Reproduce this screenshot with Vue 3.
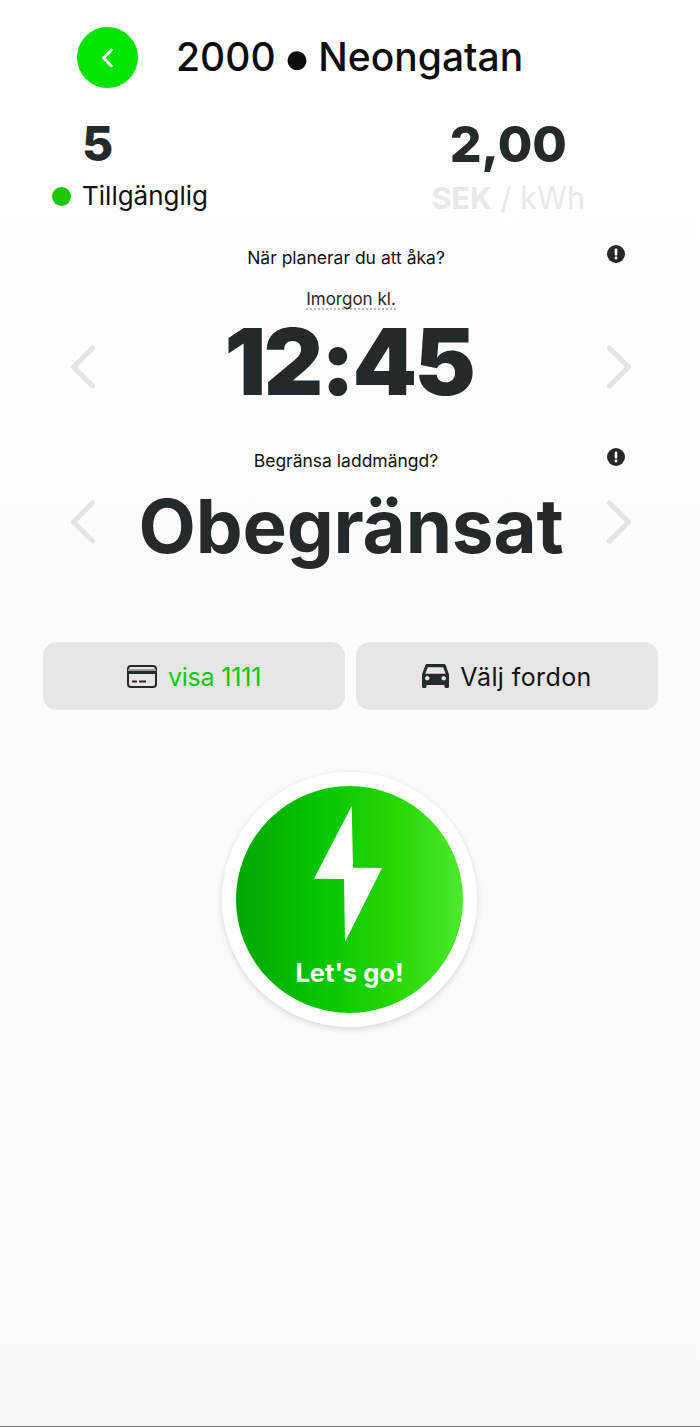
<script setup>
const infoDot = { cx: 9, cy: 13, r: 1.4 }
</script>

<template>
  <div class="page">
    <header class="head">
      <button class="back" aria-label="Tillbaka">
        <svg width="14" height="20" viewBox="0 0 14 20"><path d="M10.500 2 2.500 10l8 8" fill="none" stroke="#fff" stroke-width="2.800" stroke-linecap="round" stroke-linejoin="round"/></svg>
      </button>
      <h1 class="title">2000 <span class="bullet">•</span> Neongatan</h1>
    </header>

    <section class="stats">
      <div class="stat-left">
        <div class="count">5</div>
        <div class="status"><span class="dot"></span><span>Tillgänglig</span></div>
      </div>
      <div class="stat-right">
        <div class="price">2,00</div>
        <div class="unit"><b>SEK</b> / kWh</div>
      </div>
    </section>

    <section class="question q1">
      <span class="q-text">När planerar du att åka?</span>
      <svg class="info" width="18" height="18" viewBox="0 0 18 18"><circle cx="9" cy="9" r="9" fill="#24292c"/><rect x="7.700" y="3.600" width="2.600" height="7" rx="1.200" fill="#fff"/><circle :cx="infoDot.cx" :cy="infoDot.cy" :r="infoDot.r" fill="#fff"/></svg>
    </section>
    <div class="day"><span>Imorgon kl.</span></div>
    <section class="picker time">
      <svg class="chev" width="26" height="44" viewBox="0 0 26 44"><path d="M22.500 3 3.500 22l19 19" fill="none" stroke="#e4e4e4" stroke-width="5" stroke-linecap="round" stroke-linejoin="round"/></svg>
      <div class="big-time">12:45</div>
      <svg class="chev" width="26" height="44" viewBox="0 0 26 44"><path d="M3.500 3l19 19-19 19" fill="none" stroke="#e4e4e4" stroke-width="5" stroke-linecap="round" stroke-linejoin="round"/></svg>
    </section>

    <section class="question q2">
      <span class="q-text">Begränsa laddmängd?</span>
      <svg class="info" width="18" height="18" viewBox="0 0 18 18"><circle cx="9" cy="9" r="9" fill="#24292c"/><rect x="7.700" y="3.600" width="2.600" height="7" rx="1.200" fill="#fff"/><circle :cx="infoDot.cx" :cy="infoDot.cy" :r="infoDot.r" fill="#fff"/></svg>
    </section>
    <section class="picker limit">
      <svg class="chev" width="26" height="44" viewBox="0 0 26 44"><path d="M22.500 3 3.500 22l19 19" fill="none" stroke="#e4e4e4" stroke-width="5" stroke-linecap="round" stroke-linejoin="round"/></svg>
      <div class="big-limit">Obegränsat</div>
      <svg class="chev" width="26" height="44" viewBox="0 0 26 44"><path d="M3.500 3l19 19-19 19" fill="none" stroke="#e4e4e4" stroke-width="5" stroke-linecap="round" stroke-linejoin="round"/></svg>
    </section>

    <section class="buttons">
      <button class="pill green">
        <svg width="30" height="23" viewBox="0 0 30 23"><rect x="1" y="1" width="28" height="21" rx="3" fill="none" stroke="#24292c" stroke-width="2"/><rect x="1" y="4" width="28" height="2" fill="#9a9c9d"/><rect x="1" y="6" width="28" height="3" fill="#24292c"/><rect x="5" y="15.500" width="5" height="2" fill="#24292c"/><rect x="12" y="15.500" width="7" height="2" fill="#24292c"/></svg>
        <span class="visa-label">visa 1111</span>
      </button>
      <button class="pill">
        <svg width="27" height="24" viewBox="3 5 18 16"><path fill-rule="evenodd" d="M18.920 6.010C18.720 5.420 18.160 5 17.500 5h-11c-.66 0-1.210.42-1.420 1.010L3 12v8c0 .55.45 1 1 1h1c.55 0 1-.45 1-1v-1h12v1c0 .55.45 1 1 1h1c.55 0 1-.45 1-1v-8l-2.080-5.990zM6.500 16c-.83 0-1.500-.67-1.500-1.500S5.670 13 6.500 13s1.500.67 1.500 1.500S7.330 16 6.500 16zm11 0c-.83 0-1.500-.67-1.500-1.500s.67-1.500 1.500-1.500 1.500.67 1.500 1.500-.67 1.500-1.500 1.500zM5.200 11.500 6.900 7.200h10.200l1.700 4.300H5.200z" fill="#24292c"/></svg>
        <span class="car-label">Välj fordon</span>
      </button>
    </section>

    <div class="go-wrap">
      <button class="go">
        <svg class="bolt" width="70" height="137" viewBox="0 0 70 137"><path d="M37.700 0 39 61.700 68 62 31 136 30 73 0 72.700Z" fill="#fff"/></svg>
        <span class="go-text">Let's go!</span>
      </button>
    </div>
  </div>
</template>

<style>
html, body { margin: 0; padding: 0; }
</style>

<style scoped>
.page {
  box-sizing: border-box;
  width: 700px;
  height: 1427px;
  padding-top: 27px;
  overflow: hidden;
  font-family: "Inter", "Noto Sans", sans-serif;
  color: #24292c;
  background: linear-gradient(180deg, #ffffff 0%, #f8f8f8 100%);
  border-bottom: 1px solid #777;
}
button { font: inherit; border: 0; padding: 0; }
.head { display: flex; align-items: center; gap: 38px; padding-left: 77px; height: 61px; }
.back { width: 61px; height: 61px; border-radius: 50%; background: #00e600; display: flex; align-items: center; justify-content: center; }
.title { margin: 0 0 2px; font-size: 39px; line-height: 44px; font-weight: 500; color: #0c0c0c; white-space: nowrap; word-spacing: -5px; }
.bullet { font-size: 60px; line-height: 0; vertical-align: -7px; }
.stats { display: flex; justify-content: space-between; padding: 28px 115px 0 52px; height: 104px; }
.stat-left { display: flex; flex-direction: column; }
.count { font-size: 48px; line-height: 56px; font-weight: 800; padding-left: 30px; }
.status { display: flex; align-items: center; gap: 11px; font-size: 26px; line-height: 34px; color: #111; margin-top: 7px; }
.dot { width: 19px; height: 19px; border-radius: 50%; background: #1ec800; }
.stat-right { display: flex; flex-direction: column; align-items: center; }
.price { font-size: 50px; line-height: 56px; font-weight: 800; }
.unit { font-size: 30.500px; line-height: 36px; color: #e8e8e8; white-space: nowrap; margin-top: 8px; }
.unit b { font-weight: 700; }
.question { position: relative; display: flex; justify-content: center; padding-right: 8px; }
.q-text { font-size: 17.500px; line-height: 24px; color: #111; }
.info { position: absolute; left: 607px; top: -1px; }
.q1 { margin-top: 26px; }
.day { display: flex; justify-content: center; margin-top: 18px; padding-left: 2px; font-size: 17px; }
.day span { border-bottom: 2px dotted #bbb; line-height: 22px; height: 20px; }
.picker { display: flex; align-items: center; justify-content: space-between; padding: 0 68px 0 70px; }
.time { height: 108px; margin-top: 3px; }
.big-time { font-size: 92px; line-height: 92px; font-weight: 900; letter-spacing: -2.500px; padding-bottom: 10px; margin-right: 4px; }
.q2 { margin-top: 28px; }
.limit { height: 98px; }
.big-limit { font-size: 74.500px; line-height: 90px; font-weight: 650; letter-spacing: -.2px; white-space: nowrap; padding-top: 8px; }
.buttons { display: flex; gap: 11px; padding: 0 42px 0 43px; margin-top: 71px; }
.pill { flex: 1; height: 68px; border-radius: 14px; background: #e6e6e6; display: flex; align-items: center; justify-content: center; gap: 11px; font-size: 25px; color: #111; }
.pill span { padding-top: 2px; }
.car-label { letter-spacing: .4px; }
.visa-label { letter-spacing: -.2px; }
.green { color: #00cc00; }
.go-wrap { display: flex; justify-content: center; margin-top: 62px; padding-right: 1px; }
.go { box-sizing: border-box; width: 255px; height: 255px; border-radius: 50%; border: 14px solid #fff; background: linear-gradient(90deg, #00a800 0%, #08c800 40%, #26d800 70%, #4de92e 100%); box-shadow: 0 2px 6px rgba(0,0,0,.15); display: flex; flex-direction: column; align-items: center; padding-top: 20px; }
.bolt { margin-left: -2px; flex: none; }
.go-text { color: #fff; font-size: 25.500px; line-height: 30px; font-weight: 700; margin-top: 15px; }
</style>
